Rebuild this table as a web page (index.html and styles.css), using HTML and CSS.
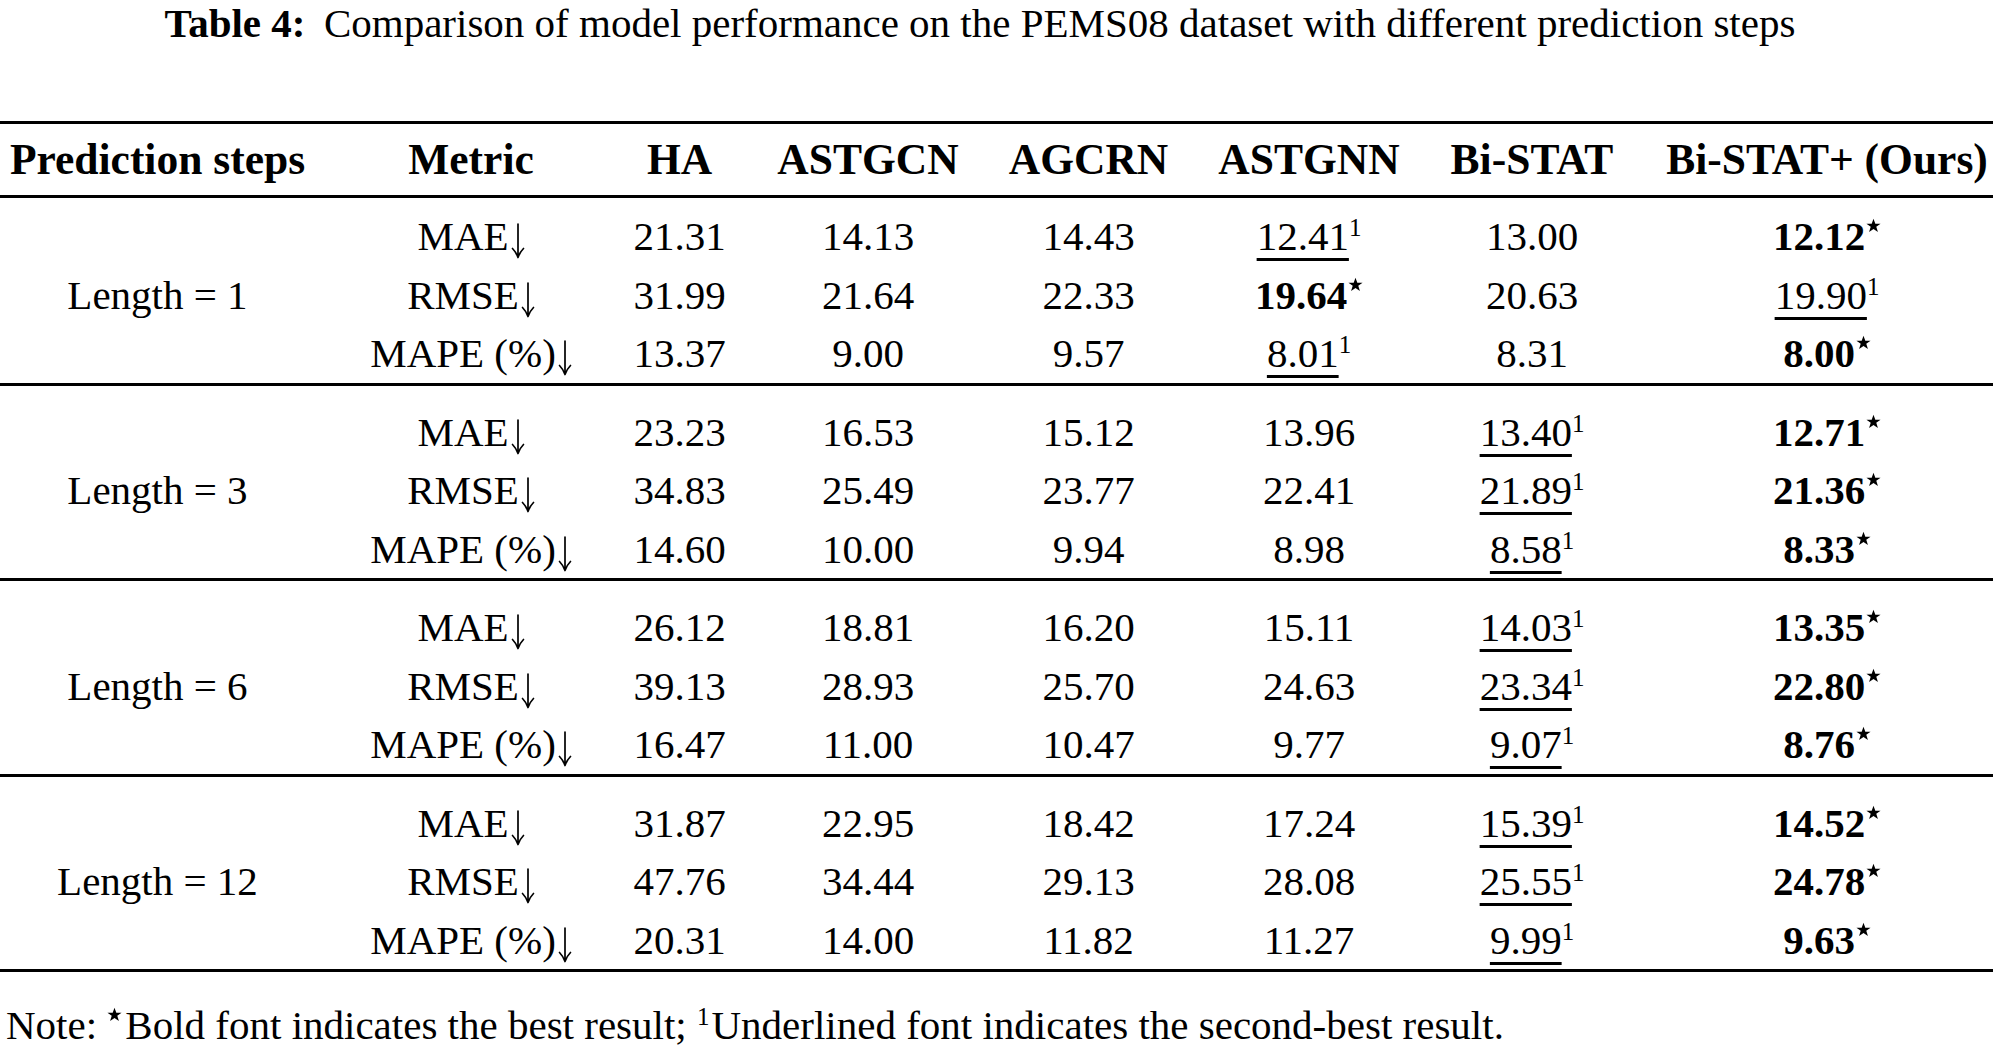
FILE: index.html
```html
<!DOCTYPE html>
<html lang="en">
<head>
<meta charset="utf-8">
<title>Table 4</title>
<link rel="stylesheet" href="styles.css">
</head>
<body>
<h1 class="caption"><b class="cap-label">Table 4:</b>Comparison of model performance on the PEMS08 dataset with different prediction steps</h1>
<table class="results">
  <colgroup>
    <col class="c1"><col class="c2"><col class="c3"><col class="c4"><col class="c5"><col class="c6"><col class="c7"><col class="c8">
  </colgroup>
  <thead>
    <tr><th>Prediction steps</th><th>Metric</th><th>HA</th><th>ASTGCN</th><th>AGCRN</th><th>ASTGNN</th><th>Bi-STAT</th><th class="last">Bi-STAT+ (Ours)</th></tr>
  </thead>
  <tbody class="grp first">
    <tr class="r1"><td></td><td>MAE<svg class="arrow" viewBox="0 0 14 36" aria-label="↓"><path d="M7 1V34M1.5 25.5Q5 29 7 34.5Q9 29 12.5 25.5"/></svg></td><td>21.31</td><td>14.13</td><td>14.43</td><td><span class="ul">12.41</span><sup class="one">1</sup></td><td>13.00</td><td class="last"><b>12.12</b><svg class="star" viewBox="0 0 20 20"><polygon points="10,1 12.4,7.6 19.4,7.6 13.7,11.8 15.9,18.6 10,14.5 4.1,18.6 6.3,11.8 0.6,7.6 7.6,7.6"/></svg></td></tr>
    <tr><td>Length = 1</td><td>RMSE<svg class="arrow" viewBox="0 0 14 36" aria-label="↓"><path d="M7 1V34M1.5 25.5Q5 29 7 34.5Q9 29 12.5 25.5"/></svg></td><td>31.99</td><td>21.64</td><td>22.33</td><td><b>19.64</b><svg class="star" viewBox="0 0 20 20"><polygon points="10,1 12.4,7.6 19.4,7.6 13.7,11.8 15.9,18.6 10,14.5 4.1,18.6 6.3,11.8 0.6,7.6 7.6,7.6"/></svg></td><td>20.63</td><td class="last"><span class="ul">19.90</span><sup class="one">1</sup></td></tr>
    <tr><td></td><td>MAPE (%)<svg class="arrow" viewBox="0 0 14 36" aria-label="↓"><path d="M7 1V34M1.5 25.5Q5 29 7 34.5Q9 29 12.5 25.5"/></svg></td><td>13.37</td><td>9.00</td><td>9.57</td><td><span class="ul">8.01</span><sup class="one">1</sup></td><td>8.31</td><td class="last"><b>8.00</b><svg class="star" viewBox="0 0 20 20"><polygon points="10,1 12.4,7.6 19.4,7.6 13.7,11.8 15.9,18.6 10,14.5 4.1,18.6 6.3,11.8 0.6,7.6 7.6,7.6"/></svg></td></tr>
  </tbody>
  <tbody class="grp">
    <tr class="r1"><td></td><td>MAE<svg class="arrow" viewBox="0 0 14 36" aria-label="↓"><path d="M7 1V34M1.5 25.5Q5 29 7 34.5Q9 29 12.5 25.5"/></svg></td><td>23.23</td><td>16.53</td><td>15.12</td><td>13.96</td><td><span class="ul">13.40</span><sup class="one">1</sup></td><td class="last"><b>12.71</b><svg class="star" viewBox="0 0 20 20"><polygon points="10,1 12.4,7.6 19.4,7.6 13.7,11.8 15.9,18.6 10,14.5 4.1,18.6 6.3,11.8 0.6,7.6 7.6,7.6"/></svg></td></tr>
    <tr><td>Length = 3</td><td>RMSE<svg class="arrow" viewBox="0 0 14 36" aria-label="↓"><path d="M7 1V34M1.5 25.5Q5 29 7 34.5Q9 29 12.5 25.5"/></svg></td><td>34.83</td><td>25.49</td><td>23.77</td><td>22.41</td><td><span class="ul">21.89</span><sup class="one">1</sup></td><td class="last"><b>21.36</b><svg class="star" viewBox="0 0 20 20"><polygon points="10,1 12.4,7.6 19.4,7.6 13.7,11.8 15.9,18.6 10,14.5 4.1,18.6 6.3,11.8 0.6,7.6 7.6,7.6"/></svg></td></tr>
    <tr><td></td><td>MAPE (%)<svg class="arrow" viewBox="0 0 14 36" aria-label="↓"><path d="M7 1V34M1.5 25.5Q5 29 7 34.5Q9 29 12.5 25.5"/></svg></td><td>14.60</td><td>10.00</td><td>9.94</td><td>8.98</td><td><span class="ul">8.58</span><sup class="one">1</sup></td><td class="last"><b>8.33</b><svg class="star" viewBox="0 0 20 20"><polygon points="10,1 12.4,7.6 19.4,7.6 13.7,11.8 15.9,18.6 10,14.5 4.1,18.6 6.3,11.8 0.6,7.6 7.6,7.6"/></svg></td></tr>
  </tbody>
  <tbody class="grp">
    <tr class="r1"><td></td><td>MAE<svg class="arrow" viewBox="0 0 14 36" aria-label="↓"><path d="M7 1V34M1.5 25.5Q5 29 7 34.5Q9 29 12.5 25.5"/></svg></td><td>26.12</td><td>18.81</td><td>16.20</td><td>15.11</td><td><span class="ul">14.03</span><sup class="one">1</sup></td><td class="last"><b>13.35</b><svg class="star" viewBox="0 0 20 20"><polygon points="10,1 12.4,7.6 19.4,7.6 13.7,11.8 15.9,18.6 10,14.5 4.1,18.6 6.3,11.8 0.6,7.6 7.6,7.6"/></svg></td></tr>
    <tr><td>Length = 6</td><td>RMSE<svg class="arrow" viewBox="0 0 14 36" aria-label="↓"><path d="M7 1V34M1.5 25.5Q5 29 7 34.5Q9 29 12.5 25.5"/></svg></td><td>39.13</td><td>28.93</td><td>25.70</td><td>24.63</td><td><span class="ul">23.34</span><sup class="one">1</sup></td><td class="last"><b>22.80</b><svg class="star" viewBox="0 0 20 20"><polygon points="10,1 12.4,7.6 19.4,7.6 13.7,11.8 15.9,18.6 10,14.5 4.1,18.6 6.3,11.8 0.6,7.6 7.6,7.6"/></svg></td></tr>
    <tr><td></td><td>MAPE (%)<svg class="arrow" viewBox="0 0 14 36" aria-label="↓"><path d="M7 1V34M1.5 25.5Q5 29 7 34.5Q9 29 12.5 25.5"/></svg></td><td>16.47</td><td>11.00</td><td>10.47</td><td>9.77</td><td><span class="ul">9.07</span><sup class="one">1</sup></td><td class="last"><b>8.76</b><svg class="star" viewBox="0 0 20 20"><polygon points="10,1 12.4,7.6 19.4,7.6 13.7,11.8 15.9,18.6 10,14.5 4.1,18.6 6.3,11.8 0.6,7.6 7.6,7.6"/></svg></td></tr>
  </tbody>
  <tbody class="grp final">
    <tr class="r1"><td></td><td>MAE<svg class="arrow" viewBox="0 0 14 36" aria-label="↓"><path d="M7 1V34M1.5 25.5Q5 29 7 34.5Q9 29 12.5 25.5"/></svg></td><td>31.87</td><td>22.95</td><td>18.42</td><td>17.24</td><td><span class="ul">15.39</span><sup class="one">1</sup></td><td class="last"><b>14.52</b><svg class="star" viewBox="0 0 20 20"><polygon points="10,1 12.4,7.6 19.4,7.6 13.7,11.8 15.9,18.6 10,14.5 4.1,18.6 6.3,11.8 0.6,7.6 7.6,7.6"/></svg></td></tr>
    <tr><td>Length = 12</td><td>RMSE<svg class="arrow" viewBox="0 0 14 36" aria-label="↓"><path d="M7 1V34M1.5 25.5Q5 29 7 34.5Q9 29 12.5 25.5"/></svg></td><td>47.76</td><td>34.44</td><td>29.13</td><td>28.08</td><td><span class="ul">25.55</span><sup class="one">1</sup></td><td class="last"><b>24.78</b><svg class="star" viewBox="0 0 20 20"><polygon points="10,1 12.4,7.6 19.4,7.6 13.7,11.8 15.9,18.6 10,14.5 4.1,18.6 6.3,11.8 0.6,7.6 7.6,7.6"/></svg></td></tr>
    <tr class="r3"><td></td><td>MAPE (%)<svg class="arrow" viewBox="0 0 14 36" aria-label="↓"><path d="M7 1V34M1.5 25.5Q5 29 7 34.5Q9 29 12.5 25.5"/></svg></td><td>20.31</td><td>14.00</td><td>11.82</td><td>11.27</td><td><span class="ul">9.99</span><sup class="one">1</sup></td><td class="last"><b>9.63</b><svg class="star" viewBox="0 0 20 20"><polygon points="10,1 12.4,7.6 19.4,7.6 13.7,11.8 15.9,18.6 10,14.5 4.1,18.6 6.3,11.8 0.6,7.6 7.6,7.6"/></svg></td></tr>
  </tbody>
</table>
<p class="note">Note: <svg class="star note-star" viewBox="0 0 20 20"><polygon points="10,1 12.4,7.6 19.4,7.6 13.7,11.8 15.9,18.6 10,14.5 4.1,18.6 6.3,11.8 0.6,7.6 7.6,7.6"/></svg>Bold font indicates the best result; <sup class="one note-one">1</sup>Underlined font indicates the second-best result.</p>
</body>
</html>
```
FILE: styles.css
```css
html, body {
  margin: 0;
  padding: 0;
  background: #ffffff;
}

body {
  color: #000000;
  font-family: "Liberation Serif", "Times New Roman", serif;
  width: 1996px;
}

.caption {
  margin: 0 0 74px 0;
  padding: 0 36px 0 0;
  font-size: 41px;
  line-height: 47px;
  font-weight: normal;
  text-align: center;
}

.cap-label {
  font-weight: bold;
  margin-right: 0.45em;
}

.results {
  width: 1993px;
  table-layout: fixed;
  border-collapse: separate;
  border-spacing: 0;
  font-size: 41px;
}

.c1 { width: 315px; }
.c2 { width: 312px; }
.c3 { width: 105px; }
.c4 { width: 272px; }
.c5 { width: 169px; }
.c6 { width: 272px; }
.c7 { width: 174px; }
.c8 { width: 374px; }

.results th {
  font-size: 43.5px;
  font-weight: bold;
  line-height: 71px;
  padding: 0;
  text-align: center;
  white-space: nowrap;
  border-top: 3px solid #000;
  border-bottom: 3px solid #000;
}

.results td {
  padding: 0;
  line-height: 58.5px;
  text-align: center;
  white-space: nowrap;
}

.results .last {
  padding-left: 42px;
}

.grp .r1 td {
  padding-top: 17px;
  border-top: 3px solid #000;
}

.grp.first .r1 td {
  padding-top: 9px;
  border-top: 0;
}

.grp.final .r3 td {
  border-bottom: 3px solid #000;
}

.arrow {
  width: 14px;
  height: 36px;
  margin-left: 2px;
  vertical-align: -9px;
  fill: none;
  stroke: #000;
  stroke-width: 1.7;
  stroke-linecap: round;
  stroke-linejoin: round;
}

.ul {
  text-decoration: underline;
  text-decoration-thickness: 2.5px;
  text-underline-offset: 8px;
}

.one {
  font-size: 25px;
  line-height: 0;
  vertical-align: 14px;
}

.star {
  width: 15px;
  height: 15px;
  vertical-align: 17px;
  margin-left: 1px;
  fill: #000;
}

.note {
  margin: 30px 0 0 6px;
  font-size: 41px;
  line-height: 47px;
  white-space: nowrap;
}

.note-star {
  margin-left: 0;
  margin-right: 3px;
}

.note-one {
  margin-right: 2px;
}
```
